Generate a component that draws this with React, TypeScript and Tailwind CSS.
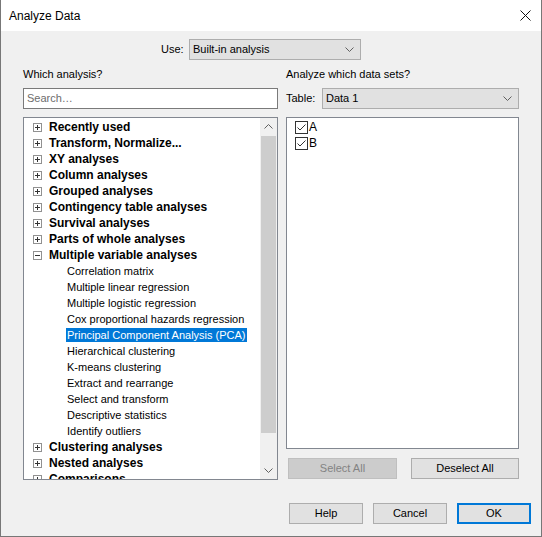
import React from "react";

const groupsTop = [
  "Recently used",
  "Transform, Normalize...",
  "XY analyses",
  "Column analyses",
  "Grouped analyses",
  "Contingency table analyses",
  "Survival analyses",
  "Parts of whole analyses",
];

const multiChildren = [
  "Correlation matrix",
  "Multiple linear regression",
  "Multiple logistic regression",
  "Cox proportional hazards regression",
  "Principal Component Analysis (PCA)",
  "Hierarchical clustering",
  "K-means clustering",
  "Extract and rearrange",
  "Select and transform",
  "Descriptive statistics",
  "Identify outliers",
];

const groupsBottom = ["Clustering analyses", "Nested analyses", "Comparisons"];

const Chevron = ({ up = false }: { up?: boolean }) => (
  <svg width="9" height="5" viewBox="0 0 9 5" className={up ? "rotate-180" : ""}>
    <path d="M0.5 0.5 L4.5 4.5 L8.5 0.5" fill="none" stroke="#606060" strokeWidth="1" />
  </svg>
);

const Expander = ({ open = false }: { open?: boolean }) => (
  <svg width="9" height="9" viewBox="0 0 9 9">
    <rect x="0.5" y="0.5" width="8" height="8" fill="#fff" stroke="#919191" />
    <path d="M2 4.5 H7" stroke="#333" strokeWidth="1" />
    {!open && <path d="M4.5 2 V7" stroke="#333" strokeWidth="1" />}
  </svg>
);

const GroupRow = ({ label, open = false }: { label: string; open?: boolean }) => (
  <div className="h-[16px] flex items-center pl-[9px] shrink-0">
    <Expander open={open} />
    <span className="ml-[7px] font-bold text-[12px] whitespace-nowrap">{label}</span>
  </div>
);

const Check = ({ label }: { label: string }) => (
  <div className="h-[16px] flex items-center pl-[8px]">
    <div className="w-[13px] h-[13px] border border-[#333] bg-white flex items-center justify-center">
      <svg width="11" height="11" viewBox="0 0 11 11">
        <path d="M1.5 5.5 L4 8 L9.5 2.5" fill="none" stroke="#333" strokeWidth="1" />
      </svg>
    </div>
    <span className="ml-px text-[12px]">{label}</span>
  </div>
);

const Btn = ({
  label,
  className = "",
}: {
  label: string;
  className?: string;
}) => (
  <div
    className={
      "h-[21px] flex items-center justify-center bg-[#e1e1e1] border border-[#adadad] " +
      className
    }
  >
    {label}
  </div>
);

export default function App() {
  return (
    <div className="w-[542px] h-[537px] bg-[#f0f0f0] border-x border-b border-[#777] flex flex-col text-[11px] text-black [font-family:'Liberation_Sans',Arial,sans-serif]">
      {/* title bar */}
      <div className="h-[31px] bg-white flex items-center justify-between pl-[8px] pr-[10px] shrink-0">
        <span className="text-[12px]">Analyze Data</span>
        <svg width="11" height="11" viewBox="0 0 11 11">
          <path d="M0.5 0.5 L10.5 10.5 M10.5 0.5 L0.5 10.5" stroke="#111" strokeWidth="1" />
        </svg>
      </div>

      <div className="px-[22px] flex flex-col">
        {/* use row */}
        <div className="mt-[8px] h-[21px] flex items-center ml-[138px]">
          <span className="w-[28px]">Use:</span>
          <div className="w-[172px] h-[21px] bg-[#e1e1e1] border border-[#adadad] flex items-center justify-between pl-[3px] pr-[6px]">
            <span>Built-in analysis</span>
            <Chevron />
          </div>
        </div>

        {/* columns */}
        <div className="mt-[6px] flex gap-[8px]">
          {/* left */}
          <div className="w-[256px] flex flex-col">
            <div className="h-[16px] flex items-center">Which analysis?</div>
            <div className="mt-[6px] h-[21px] bg-white border border-[#7a7a7a] flex items-center pl-[3px] text-[#6d6d6d]">
              Search…
            </div>
            <div className="mt-[8px] h-[363px] bg-white border border-[#828790] flex">
              <div className="flex-1 overflow-hidden pt-px flex flex-col">
                {groupsTop.map((g) => (
                  <GroupRow key={g} label={g} />
                ))}
                <GroupRow label="Multiple variable analyses" open />
                {multiChildren.map((c) => (
                  <div key={c} className="h-[16px] flex items-center pl-[42px] shrink-0">
                    <span
                      className={
                        "h-[14px] flex items-center px-px whitespace-nowrap " +
                        (c.startsWith("Principal") ? "bg-[#0078d7] text-white" : "")
                      }
                    >
                      {c}
                    </span>
                  </div>
                ))}
                {groupsBottom.map((g) => (
                  <GroupRow key={g} label={g} />
                ))}
              </div>
              <div className="w-[17px] bg-[#f0f0f0] flex flex-col items-center">
                <div className="h-[17px] flex items-center justify-center">
                  <Chevron up />
                </div>
                <div className="mt-px w-[15px] h-[297px] bg-[#cdcdcd]" />
                <div className="flex-1" />
                <div className="h-[17px] flex items-center justify-center">
                  <Chevron />
                </div>
              </div>
            </div>
          </div>

          {/* right */}
          <div className="w-[234px] flex flex-col">
            <div className="h-[16px] flex items-center">Analyze which data sets?</div>
            <div className="mt-[6px] h-[21px] flex items-center">
              <span className="w-[36px]">Table:</span>
              <div className="w-[197px] h-[21px] bg-[#e1e1e1] border border-[#adadad] flex items-center justify-between pl-[3px] pr-[6px]">
                <span>Data 1</span>
                <Chevron />
              </div>
            </div>
            <div className="mt-[8px] h-[332px] bg-white border border-[#828790] pt-px">
              <Check label="A" />
              <Check label="B" />
            </div>
            <div className="mt-[9px] flex ml-[2px] gap-[14px]">
              <Btn label="Select All" className="w-[109px] !bg-[#cccccc] !border-[#bfbfbf] text-[#838383]" />
              <Btn label="Deselect All" className="w-[108px]" />
            </div>
          </div>
        </div>
      </div>

      {/* bottom buttons */}
      <div className="mt-[23px] flex justify-end gap-[10px] pr-[10px]">
        <Btn label="Help" className="w-[74px]" />
        <Btn label="Cancel" className="w-[74px]" />
        <Btn label="OK" className="w-[74px] !border-2 !border-[#0078d7]" />
      </div>
    </div>
  );
}
